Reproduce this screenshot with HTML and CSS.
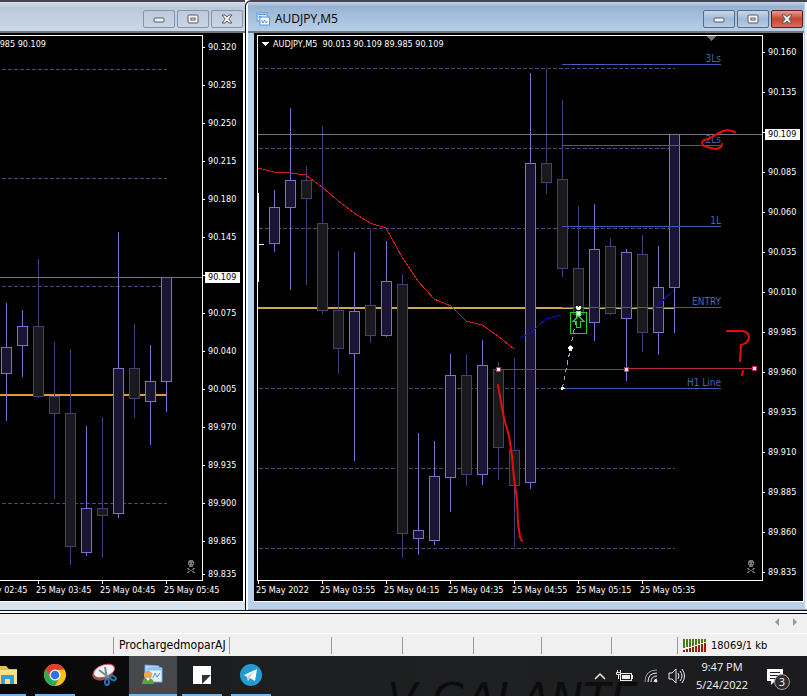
FILE: index.html
```html
<!DOCTYPE html>
<html lang="en">
<head>
<meta charset="utf-8">
<title>AUDJPY,M5</title>
<link rel="stylesheet" href="styles.css">
</head>
<body>
<main class="workspace">
  <section class="window window-back" aria-label="Chart in background">
    <header class="titlebar">
      <div class="window-buttons">
        <button type="button" aria-label="Minimize"><svg width="12" height="8"><rect x="1" y="3" width="10" height="4" rx="1"/></svg></button>
        <button type="button" aria-label="Restore"><svg width="12" height="10"><rect x="1" y="1" width="10" height="8" rx="1"/><rect x="4" y="4" width="4" height="2"/></svg></button>
        <button type="button" aria-label="Close"><svg width="12" height="10"><path d="M1 1h3.200l1.800 2 1.800-2h3.200l-3.200 4 3.200 4h-3.200l-1.800-2-1.800 2H1l3.200-4z"/></svg></button>
      </div>
    </header>
    <div class="chart">
      <div class="plot">
        <svg viewBox="0 36 202 544" preserveAspectRatio="xMaxYMin slice" shape-rendering="crispEdges">
          <path class="grid" d="M2 69.500H167M2 178.500H167M2 286.500H167M2 503.500H167"/>
          <path class="level-orange" d="M0 395H167"/>
          <path class="wick-down" d="M38.500 259V398M54.500 342V499M70.500 349V565M102.500 417V558M134.500 324V418"/>
          <path class="wick-up" d="M6.500 303V421M22.500 310V377M86.500 426V556M118.500 232V518M150.500 345V445M166.500 277V412"/>
          <path class="body-down" d="M33.500 326.500h10v70h-10zM49.500 396.500h10v17h-10zM65.500 413.500h10v133h-10zM97.500 508.500h10v7h-10zM129.500 368.500h10v30h-10z"/>
          <path class="body-up" d="M1.500 347.500h10v26h-10zM17.500 326.500h10v19h-10zM81.500 508.500h10v44h-10zM113.500 368.500h10v145h-10zM145.500 381.500h10v20h-10zM161.500 277.500h10v104h-10z"/>
          <path class="price-line" d="M0 277.500H202"/>
          <text class="chart-title" x="46" y="47" text-anchor="end">985 90.109</text>
          <g class="skull" transform="translate(186 560)"><path d="M2 1h1V0h4v1h1v4H7v2H3V5H2z"/><path class="skull-eyes" d="M3 3h1v1H3zM6 3h1v1H6z"/><path d="M1 8h2v1h1v1h2V9h1V8h2v1H8v1H6v1h2v1h1v1H7v-1H6v-1H4v1H3v1H1v-1h1v-1h2v-1H2V9H1z"/></g>
        </svg>
      </div>
      <ol class="price-axis axis-38">
        <li>90.320</li><li>90.285</li><li>90.250</li><li>90.215</li><li>90.180</li><li>90.145</li><li></li><li>90.075</li><li>90.040</li><li>90.005</li><li>89.970</li><li>89.935</li><li>89.900</li><li>89.865</li><li>89.835</li>
      </ol>
      <span class="price-tag" style="top:239px">90.109</span>
      <ol class="time-axis">
        <li>25 May 02:45</li><li>25 May 03:45</li><li>25 May 04:45</li><li>25 May 05:45</li>
      </ol>
    </div>
  </section>

  <section class="window window-front" aria-label="AUDJPY,M5 chart">
    <header class="titlebar">
      <svg class="title-icon" width="14" height="14"><rect x="1" y="1" width="10" height="8" fill="#dcecff" stroke="#5b9bdc"/><path d="M2 2.500h8" stroke="#5b9bdc"/><path d="M3 6l1-2 1 2 1-2" fill="none" stroke="#5b9bdc"/><rect x="4" y="5" width="9.500" height="8" fill="#f4faff" stroke="#5b9bdc"/><path d="M5.500 8l1.500 3 1.500-3 1.500 3 1.500-2" fill="none" stroke="#5b9bdc"/></svg>
      <h1>AUDJPY,M5</h1>
      <div class="window-buttons">
        <button type="button" aria-label="Minimize"><svg width="12" height="8"><rect x="1" y="3" width="10" height="4" rx="1"/></svg></button>
        <button type="button" aria-label="Restore"><svg width="12" height="10"><rect x="1" y="1" width="10" height="8" rx="1"/><rect x="4" y="4" width="4" height="2"/></svg></button>
        <button type="button" class="close" aria-label="Close"><svg width="12" height="10"><path d="M1 1h3.200l1.800 2 1.800-2h3.200l-3.200 4 3.200 4h-3.200l-1.800-2-1.800 2H1l3.200-4z"/></svg></button>
      </div>
    </header>
    <div class="chart">
      <div class="plot">
        <svg viewBox="258 36 504 544" preserveAspectRatio="xMinYMin slice" shape-rendering="crispEdges">
          <path class="grid" d="M259 68.500H675M259 148.500H675M259 228.500H675M259 388.500H675M259 468.500H675M259 548.500H675"/>
          <path class="level-gold" d="M258 308H562"/>
          <path class="level-gold-thin" d="M562 308.500H675"/>
          <path class="wick-down" d="M306.500 166V285M322.500 126V314M338.500 251V374M370.500 230V343M402.500 274V558M466.500 354V486M498.500 362V480M514.500 358V547M546.500 69V194M562.500 100V277M578.500 206V315M610.500 238V315M642.500 235V352"/>
          <path class="wick-up" d="M274.500 190V252M290.500 108V290M354.500 252V461M386.500 241V337M418.500 433V555M434.500 441V545M450.500 354V512M482.500 340V485M530.500 73V489M594.500 204V341M626.500 249V381M658.500 246V355M674.500 134V333"/>
          <path class="body-down" d="M301.500 180.500h10v18h-10zM317.500 223.500h10v87h-10zM333.500 310.500h10v38h-10zM365.500 305.500h10v30h-10zM397.500 284.500h10v249h-10zM461.500 375.500h10v99h-10zM493.500 369.500h10v78h-10zM509.500 450.500h10v35h-10zM541.500 163.500h10v19h-10zM557.500 179.500h10v89h-10zM573.500 268.500h10v46h-10zM605.500 246.500h10v67h-10zM637.500 254.500h10v78h-10z"/>
          <path class="body-up" d="M269.500 207.500h10v36h-10zM285.500 180.500h10v27h-10zM349.500 311.500h10v42h-10zM381.500 281.500h10v54h-10zM413.500 530.500h10v8h-10zM429.500 476.500h10v64h-10zM445.500 375.500h10v102h-10zM477.500 365.500h10v109h-10zM525.500 163.500h10v319h-10zM589.500 249.500h10v73h-10zM621.500 252.500h10v66h-10zM653.500 287.500h10v45h-10zM669.500 134.500h10v153h-10z"/>
          <path class="bar-white" d="M258.500 193V282M258 244.500H264"/>
          <path class="price-line" d="M258 134.500H762"/>
          <path class="target" d="M562 64.500H721M562 145.500H721M562 226.500H721M562 307.500H721M562 388.500H721"/>
          <g class="target-label" text-anchor="end">
            <text x="721" y="62">3Ls</text><text x="721" y="143">2Ls</text><text x="721" y="224">1L</text><text x="721" y="305">ENTRY</text><text x="721" y="386">H1 Line</text>
          </g>
          <path class="ma-red" d="M258 168L274 172 290 173 306 175 322 187 337 200 354 213 370 223 386 228 402 257 418 281 434 299 451 306 466 321 482 325 498 336 514 349"/>
          <path class="ma-blue" d="M520 338L530 333 546 319 561 315M652 310L658 305 674 290"/>
          <path class="trend" d="M498 369.500H626M626 368.500H754"/>
          <g class="handle"><path d="M496.500 367.500h4v4h-4zM624.500 367.500h4v4h-4zM752.500 366.500h4v4h-4z"/></g>
          <path class="order-path" d="M562.500 388L570.500 348 578.500 308"/>
          <path class="dots" d="M576 306h2v1h1v-1h2v3h-1v1h-3v-1h-1zM569 346h3v1h1v2h-1v2h-3v-2h-1v-2h1zM561 387h3v1h1v1h-2v1h-2z"/>
          <path class="buy" d="M570.500 312.500h16v21h-16zM578.500 316l5 5h-3v6h-4v-6h-3z"/>
          <path class="buy-dot" d="M576.500 311.500h4v4h-4z"/>
          <g class="marker" shape-rendering="auto">
            <path d="M498 385L501 402 504 418 509 436 512 456 514 478 517 500 518 523 520 537 522 541"/>
            <path d="M735 132Q729 129 723 131L717 134Q710 139 704 140 700 143 704 146 710 148 716 149L721 147 722 144"/>
            <path d="M727 331H742Q749 332 749 337 749 343 741 345L740 361"/>
            <path d="M743 371L742 375"/>
          </g>
          <path class="shift-mark" d="M706 36h10l-5 5z"/>
          <path class="menu-mark" d="M261 42h8l-4 4z"/>
          <text class="chart-title" x="273" y="47">AUDJPY,M5&#160; 90.013 90.109 89.985 90.109</text>
          <g class="skull" transform="translate(746 560)"><path d="M2 1h1V0h4v1h1v4H7v2H3V5H2z"/><path class="skull-eyes" d="M3 3h1v1H3zM6 3h1v1H6z"/><path d="M1 8h2v1h1v1h2V9h1V8h2v1H8v1H6v1h2v1h1v1H7v-1H6v-1H4v1H3v1H1v-1h1v-1h2v-1H2V9H1z"/></g>
        </svg>
      </div>
      <ol class="price-axis axis-40">
        <li>90.160</li><li>90.135</li><li></li><li>90.085</li><li>90.060</li><li>90.035</li><li>90.010</li><li>89.985</li><li>89.960</li><li>89.935</li><li>89.910</li><li>89.885</li><li>89.860</li><li>89.835</li>
      </ol>
      <span class="price-tag" style="top:96px">90.109</span>
      <ol class="time-axis">
        <li>25 May 2022</li><li>25 May 03:55</li><li>25 May 04:15</li><li>25 May 04:35</li><li>25 May 04:55</li><li>25 May 05:15</li><li>25 May 05:35</li>
      </ol>
    </div>
  </section>
</main>

<nav class="tab-strip" aria-label="Chart tabs">
  <button type="button" aria-label="Previous"><svg width="4" height="8"><path d="M4 0v8L0 4z"/></svg></button>
  <button type="button" aria-label="Next"><svg width="4" height="8"><path d="M0 0v8l4-4z"/></svg></button>
</nav>

<div class="status-bar">
  <span></span><span>ProchargedmoparAJ</span><span></span><span></span><span></span><span></span><span></span><span></span>
  <span class="traffic">
    <svg width="24" height="14" shape-rendering="crispEdges"><path stroke="#4c7a16" stroke-width="2" d="M1 0v9M4 0v8M7 0v8M10 0v7M13 0v6M16 0v5M19 0v4M22 0v3"/><path stroke="#a01c10" stroke-width="2" d="M1 11v2M4 10v3M7 9v4M10 8v5M13 7v6M16 6v7M19 5v8M22 4v9"/></svg>
    18069/1 kb
  </span>
</div>

<footer class="taskbar">
  <div class="wallpaper" aria-hidden="true">V GALANTE</div>
  <div class="apps">
    <button type="button" class="app app-first open" aria-label="File Explorer"><svg width="32" height="24"><path d="M0 3h13l3 3h8v15H0z" fill="#e9bd4e"/><path d="M0 7h24v14H0z" fill="#fbe08a"/><path d="M8 21v-9h13v9h-4v-5h-5v5z" fill="#3d9ad4"/></svg></button>
    <button type="button" class="app open" aria-label="Chrome"><svg width="24" height="24" viewBox="-12 -12 24 24"><circle r="11" fill="#fbc116"/><path d="M-9.500-5.500A11 11 0 0 0 0 11L4.600 2.600 0 5-4.300 2.500z" fill="#2da94f"/><path d="M-9.500-5.500A11 11 0 0 1 9.500-5.500L0-5-4.500 2.500z" fill="#e33b2e"/><circle r="5.500" fill="#fff"/><circle r="4.300" fill="#2a74e8"/></svg></button>
    <button type="button" class="app" aria-label="Snipping Tool"><svg width="26" height="24"><ellipse cx="12" cy="10" rx="11" ry="7" transform="rotate(-20 12 10)" fill="#a54a4c"/><ellipse cx="13" cy="8" rx="11" ry="6" transform="rotate(-20 13 8)" fill="#f4f2f3" stroke="#c65256"/><path d="M14 4l2 12M8 7l12 9" stroke="#788996" stroke-width="2"/><g fill="none" stroke="#2674b5" stroke-width="2"><ellipse cx="16" cy="19" rx="2" ry="3"/><ellipse cx="22" cy="15" rx="3" ry="2" transform="rotate(30 22 15)"/></g></svg></button>
    <button type="button" class="app open active" aria-label="MetaTrader"><svg width="24" height="24"><path d="M4 2l14 1v13H4z" fill="#bcdcf8" stroke="#6faee4"/><path d="M7 5h14v14H7z" fill="#e4f1fc" stroke="#6faee4"/><path d="M7 6h14" stroke="#8fc4f0" stroke-width="3"/><path d="M12 15l2-5 2 4 3-4" fill="none" stroke="#4e92d0"/><circle cx="7" cy="12" r="4" fill="#e9a84e"/><path d="M1 21q0-6 6-6t6 6z" fill="#61a33a"/><path d="M5 15l2 3 2-3z" fill="#fff"/></svg></button>
    <button type="button" class="app open" aria-label="Sticky Notes"><svg width="20" height="20"><path d="M1 1h18v18H1z" fill="#fff"/><path d="M10 19v-9h9z" fill="#303234"/></svg></button>
    <button type="button" class="app open" aria-label="Telegram"><svg width="24" height="24"><circle cx="12" cy="12" r="11" fill="#249bd1"/><path d="M5 12l13-6-2 12-5-3-2 3-1-4z" fill="#fff"/><path d="M8 14l8-6-6 7-1 3z" fill="#a9cbe0"/></svg></button>
  </div>
  <div class="tray">
    <svg width="12" height="8"><path d="M1 7l5-5 5 5" stroke-width="1.500"/></svg>
    <svg width="18" height="14"><rect x="4.500" y="4.500" width="11" height="7"/><path d="M6 6h8v4H6z" fill="#eee" stroke="none"/><path d="M16.500 6v4M.5 3.500h4v2h-4zM1.500 1v2M4.500 1v2M2.500 5v5"/></svg>
    <svg class="wifi" width="14" height="14"><path d="M1 13Q1 1 13 1" opacity=".6"/><path d="M4 13Q4 4 13 4"/><path d="M7 13Q7 7 13 7"/><path d="M10 13Q10 10 13 10"/><circle cx="12" cy="12" r="1" fill="#eee"/></svg>
    <svg width="18" height="16"><path d="M1 5h3l4-4v14l-4-4H1zM10 5q2 3 0 6M12 3q4 5 0 10M14 1q5 7 0 14"/></svg>
    <time class="clock">9:47 PM<br>5/24/2022</time>
    <button type="button" class="notifications" aria-label="3 notifications"><svg width="18" height="18"><path d="M1 1h16v12H9l-4 4v-4H1z" fill="#fff" stroke="none"/><path d="M4 4.500h10M4 7.500h10M4 10.500h7" stroke="#222"/></svg><span class="badge">3</span></button>
  </div>
</footer>
</body>
</html>
```

FILE: styles.css
```css
* { box-sizing: border-box; }

body {
  margin: 0;
  background: #f0f0f0;
  color: #000;
  font-family: "Open Sans", sans-serif;
  font-size: 12px;
  overflow-x: hidden;
}

button { font: inherit; padding: 0; border: 0; background: none; }
ol { list-style: none; margin: 0; padding: 0; }
svg { display: block; flex: none; }

/* Workspace and chart windows */
.workspace {
  display: grid;
  grid-template-columns: minmax(0, 245fr) minmax(0, 562fr);
  background: #fff;
  padding-bottom: 2px;
  border-bottom: 1px solid #000;
}

.window {
  border-top: 2px solid #45454f;
  border-bottom: 1px solid #10101a;
}

.window-back {
  background: #d8e3ee;
  padding-bottom: 8px;
}

.window-front {
  background: #b9d1ea;
  border-left: 1px solid #000;
  border-top-left-radius: 6px;
  padding: 0 3px 8px 8px;
  box-shadow: inset 2px 0 #fff, inset 0 -1px #4cc6e4, inset -2px 0 #f3f3f3;
}

.titlebar {
  display: flex;
  align-items: center;
  gap: 5px;
  height: 31px;
  border-bottom: 2px solid #6c7a86;
}

.window-back .titlebar {
  background: linear-gradient(#d4deea, #bac9da 20%, #cbd7e5);
  padding-right: 2px;
}

.window-front .titlebar {
  background: linear-gradient(#c4d6ea, #98b3d2 15%, #b7cfe8);
  margin-left: -6px;
  padding: 0 1px 0 8px;
}

.titlebar h1 { margin: 0; font-size: 12px; font-weight: 400; line-height: 16px; padding-top: 4px; }
.title-icon { margin-top: 4px; }

.window-buttons { display: flex; gap: 2px; margin-left: auto; padding-top: 4px; }

.window-buttons button {
  display: grid;
  place-items: center;
  width: 32px;
  height: 18px;
  border: 1px solid #8794a8;
  border-radius: 2px;
}

.window-front .window-buttons button {
  border-color: #586b86;
  background: linear-gradient(#c5d7eb, #a2bad6 50%, #b8cde5);
}

.window-front .window-buttons .close {
  border-color: #5c1f1c;
  background: linear-gradient(#e2a092, #c24632 50%, #d5705a);
}

.window-buttons svg { fill: #f4f4f4; stroke: #565c68; }

.chart {
  position: relative;
  display: grid;
  grid-template-columns: minmax(0, 1fr) 40px;
  background: #000;
  color: #fff;
  padding-top: 2px;
  border-bottom: 1px solid #fff;
  font-family: "DejaVu Sans Condensed", "DejaVu Sans", sans-serif;
  font-size: 9px;
}

.window-back .chart { border-right: 2px solid #fff; }
.window-front .chart { padding-left: 3px; border-right: 1px solid #fff; }

.plot { border: 1px solid #fff; height: 546px; }
.window-back .plot { border-left: 0; }
.plot svg { width: 100%; height: 100%; }

.price-axis { display: flex; flex-direction: column; }
.axis-38 { padding-top: 6px; gap: 26px; }
.axis-40 { padding-top: 11px; gap: 28px; }
.price-axis li { height: 12px; line-height: 12px; display: flex; align-items: center; gap: 3px; }
.price-axis li::before { content: ""; width: 2px; height: 1px; background: #fff; }
.axis-38 li:last-child { margin-top: -5px; }

.price-tag {
  position: absolute;
  right: 3px;
  width: 35px;
  padding-left: 3px;
  background: #fff;
  color: #000;
  line-height: 11px;
}

.time-axis {
  grid-column: 1 / -1;
  display: flex;
  height: 20px;
  overflow: hidden;
}

.time-axis li {
  flex: 0 0 64px;
  white-space: nowrap;
  line-height: 13px;
}

.time-axis li::before { content: ""; display: block; width: 1px; height: 3px; margin-left: 2px; background: #fff; }
.window-back .time-axis { justify-content: flex-end; padding-right: 15px; }
.window-front .time-axis { margin-left: -1px; }

/* Chart marks */
.grid, .level-orange, .level-gold, .level-gold-thin, .wick-up, .wick-down, .price-line,
.target, .trend, .bar-white, .ma-red, .ma-blue, .order-path, .buy, .marker { fill: none; }
.grid { stroke: #4a4a78; stroke-dasharray: 4 2; }
.level-orange { stroke: #d8a02c; stroke-width: 2; }
.level-gold { stroke: #c8a850; stroke-width: 2; }
.level-gold-thin { stroke: #c8b868; }
.wick-up { stroke: #7a70d0; }
.wick-down { stroke: #464078; }
.body-up { fill: #1a1534; stroke: #7a70d0; }
.body-down { fill: #1a1a1c; stroke: #464070; }
.price-line { stroke: #74747c; }
.bar-white { stroke: #fff; }
.target { stroke: #4059b4; }
.target-label { fill: #4a66b4; font-size: 10px; }
.chart-title { fill: #fff; font-size: 9px; }
.ma-red { stroke: #d81c1c; }
.ma-blue { stroke: #1212b4; }
.trend { stroke: #b82840; }
.handle { fill: #fff; stroke: #b83050; }
.order-path { stroke: #a4a4c8; stroke-dasharray: 4 4; }
.dots { fill: #fff; }
.buy { stroke: #1fd01f; }
.buy-dot { fill: #fff; stroke: #60f060; }
.marker { stroke: #e80c0c; stroke-width: 2; stroke-linecap: round; stroke-linejoin: round; }
.shift-mark { fill: #747474; }
.menu-mark { fill: #fff; }
.skull { fill: #747474; }
.skull-eyes { fill: #000; }

/* Tab strip */
.tab-strip {
  display: flex;
  justify-content: flex-end;
  align-items: center;
  gap: 14px;
  height: 20px;
  padding: 0 10px 4px;
  border-bottom: 1px solid #fff;
  fill: #9a9a9a;
}

/* Status bar */
.status-bar {
  display: grid;
  grid-template-columns: 113fr 116fr 102fr 71fr 71fr 68fr 70fr 66fr 130fr;
  height: 22px;
  padding: 3px 0 2px;
  font-family: "DejaVu Sans Condensed", "DejaVu Sans", sans-serif;
}

.status-bar span { border-left: 1px solid #9a9a9a; padding-left: 5px; line-height: 17px; white-space: nowrap; min-width: 0; }
.status-bar span:first-child { border-left: 0; }
.status-bar .traffic { display: flex; align-items: center; gap: 4px; font-size: 11px; }

/* Taskbar */
.taskbar {
  position: relative;
  display: flex;
  justify-content: space-between;
  height: 40px;
  overflow: hidden;
  background: linear-gradient(90deg, #060607, #0b0b0c 15%, #1c1d1f 22%, #1f2022 60%, #1b1b1d);
}

.wallpaper {
  position: absolute;
  left: 48%;
  top: 20px;
  color: #0c0c0d;
  font: italic 44px/48px "DejaVu Sans", sans-serif;
  white-space: nowrap;
}

.apps, .tray { position: relative; display: flex; }
.apps { gap: 9px; }

.app { display: grid; place-items: center; width: 40px; border-bottom: 2px solid transparent; }
.app.open { border-bottom-color: #76b4e6; }
.app-first { width: 26px; justify-content: start; overflow: hidden; }
.app-first svg { margin-left: -7px; }
.app.active { width: 48px; margin: 0 -4px; background: #46484b; }

.tray { align-items: center; gap: 10px; padding-right: 17px; color: #f4f4f4; fill: none; stroke: #eee; }
.clock { width: 52px; text-align: center; line-height: 18px; font-size: 11px; stroke: none; white-space: nowrap; }
.notifications { position: relative; width: 24px; height: 30px; padding-top: 2px; margin-left: 8px; color: #fff; }

.badge {
  position: absolute;
  left: 8px;
  top: 13px;
  width: 16px;
  height: 16px;
  border: 1px solid #a0a0a0;
  border-radius: 50%;
  background: #2c2c2e;
  font-size: 11px;
  line-height: 14px;
  text-align: center;
}
```
